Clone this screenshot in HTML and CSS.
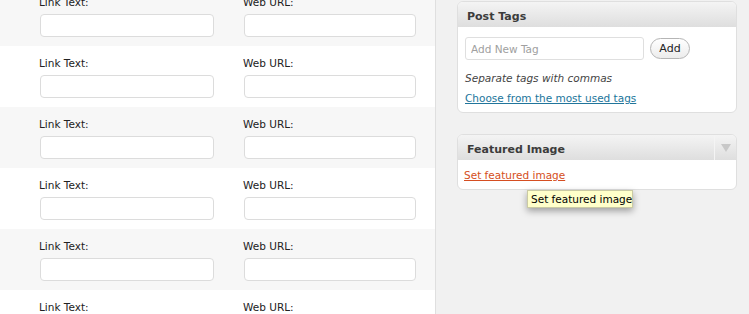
FILE: index.html
```html
<!DOCTYPE html>
<html>
<head>
<meta charset="utf-8">
<link rel="stylesheet" href="styles.css">
</head>
<body>
<div class="page">
  <div class="links">
    <div class="rows">
      <div class="row alt">
        <div class="field"><label class="lbl">Link Text:</label><input class="txt" type="text"></div>
        <div class="field url"><label class="lbl">Web URL:</label><input class="txt" type="text"></div>
      </div>
      <div class="row">
        <div class="field"><label class="lbl">Link Text:</label><input class="txt" type="text"></div>
        <div class="field url"><label class="lbl">Web URL:</label><input class="txt" type="text"></div>
      </div>
      <div class="row alt">
        <div class="field"><label class="lbl">Link Text:</label><input class="txt" type="text"></div>
        <div class="field url"><label class="lbl">Web URL:</label><input class="txt" type="text"></div>
      </div>
      <div class="row">
        <div class="field"><label class="lbl">Link Text:</label><input class="txt" type="text"></div>
        <div class="field url"><label class="lbl">Web URL:</label><input class="txt" type="text"></div>
      </div>
      <div class="row alt">
        <div class="field"><label class="lbl">Link Text:</label><input class="txt" type="text"></div>
        <div class="field url"><label class="lbl">Web URL:</label><input class="txt" type="text"></div>
      </div>
      <div class="row">
        <div class="field"><label class="lbl">Link Text:</label><input class="txt" type="text"></div>
        <div class="field url"><label class="lbl">Web URL:</label><input class="txt" type="text"></div>
      </div>
    </div>
  </div>
  <div class="side">
    <div class="postbox">
      <h3 class="box-title">Post Tags</h3>
      <div class="box-inside tags">
        <div class="tag-add">
          <input class="tag-input" type="text" placeholder="Add New Tag">
          <button class="btn" type="button">Add</button>
        </div>
        <p class="howto">Separate tags with commas</p>
        <p class="cloud"><a class="link" href="#">Choose from the most used tags</a></p>
      </div>
    </div>
    <div class="postbox featured">
      <div class="box-head">
        <h3 class="box-title grow">Featured Image</h3>
        <div class="toggle"><span class="arrow"></span></div>
      </div>
      <div class="box-inside feat">
        <a class="link hot" href="#">Set featured image</a>
      </div>
      <div class="tooltip">Set featured image</div>
    </div>
  </div>
</div>
</body>
</html>
```
FILE: styles.css
```css
html, body {
  margin: 0;
  padding: 0;
}
body {
  font-family: "DejaVu Sans", "Liberation Sans", sans-serif;
  font-size: 10.5px;
  color: #333;
  background: #f1f1f1;
  overflow: hidden;
}
.page {
  display: flex;
  width: 749px;
  height: 314px;
  overflow: hidden;
}
.links {
  width: 435px;
  flex: none;
  border-right: 1px solid #dfdfdf;
  background: #fff;
  overflow: hidden;
}
.rows {
  margin-top: -15px;
}
.row {
  display: flex;
  gap: 30px;
  padding: 10px 0 9px 40px;
  height: 61px;
  box-sizing: border-box;
  background: #fff;
}
.row.alt {
  background: #f7f7f7;
}
.field {
  display: flex;
  flex-direction: column;
  width: 174px;
}
.field.url {
  width: 172px;
}
.lbl {
  display: block;
  line-height: 15px;
  height: 15px;
  margin-left: -1px;
  color: #222;
}
.txt {
  margin: 4px 0 0;
  height: 23px;
  box-sizing: border-box;
  border: 1px solid #dcdcdc;
  border-radius: 4px;
  background: #fff;
  padding: 0 4px;
  font: inherit;
  outline: none;
}
.side {
  flex: 1;
  padding: 1px 12px 0 21px;
  background: #f1f1f1;
}
.postbox {
  width: 280px;
  box-sizing: border-box;
  border: 1px solid #dfdfdf;
  border-radius: 6px;
  background: #fff;
  overflow: visible;
}
.box-title {
  margin: 0;
  height: 25px;
  box-sizing: border-box;
  padding: 8px 9px 0;
  line-height: 13px;
  font-size: 11px;
  font-weight: bold;
  color: #3c3c3c;
  background: linear-gradient(#f4f4f4, #dedede);
  border-radius: 5px 5px 0 0;
}
.box-inside {
  padding: 10px 7px 6px;
}
.tag-add {
  display: flex;
  align-items: center;
  gap: 6px;
}
.tag-input {
  width: 179px;
  height: 23px;
  box-sizing: border-box;
  margin: 0;
  border: 1px solid #dfdfdf;
  border-radius: 3px;
  padding: 0 5px;
  font: inherit;
  color: #333;
  outline: none;
}
.tag-input::placeholder {
  color: #a0a0a0;
}
.btn {
  width: 40px;
  height: 21px;
  margin: 0;
  padding: 0;
  border: 1px solid #b5b5b5;
  border-radius: 11px;
  background: linear-gradient(#ffffff, #ececec);
  font-family: inherit;
  font-size: 11px;
  color: #222;
}
.howto {
  margin: 11px 0 0;
  line-height: 15px;
  font-style: italic;
  color: #444;
}
.cloud {
  margin: 5px 0 0;
  line-height: 15px;
}
.link {
  color: #21759b;
  text-decoration: underline;
}
.link.hot {
  color: #d54e21;
}
.featured {
  position: relative;
  margin-top: 21px;
}
.box-head {
  display: flex;
  background: linear-gradient(#f4f4f4, #dedede);
  border-radius: 5px 5px 0 0;
}
.box-title.grow {
  flex: 1;
  background: none;
}
.toggle {
  width: 21px;
  height: 25px;
  border-left: 1px solid #f4f4f4;
  display: flex;
  align-items: center;
  justify-content: center;
}
.arrow {
  width: 0;
  height: 0;
  border-left: 5px solid transparent;
  border-right: 5px solid transparent;
  border-top: 8px solid #c8c8c8;
  margin-left: 1px;
}
.box-inside.feat {
  padding: 8px 6px 6px;
  line-height: 15px;
}
.tooltip {
  position: absolute;
  left: 69px;
  top: 55px;
  width: 106px;
  height: 18px;
  box-sizing: border-box;
  padding: 1px 3px 0;
  line-height: 15px;
  background: #ffffca;
  border: 1px solid #cacaa4;
  color: #000;
  white-space: nowrap;
  box-shadow: 0 3px 7px rgba(0, 0, 0, 0.35);
}
```
